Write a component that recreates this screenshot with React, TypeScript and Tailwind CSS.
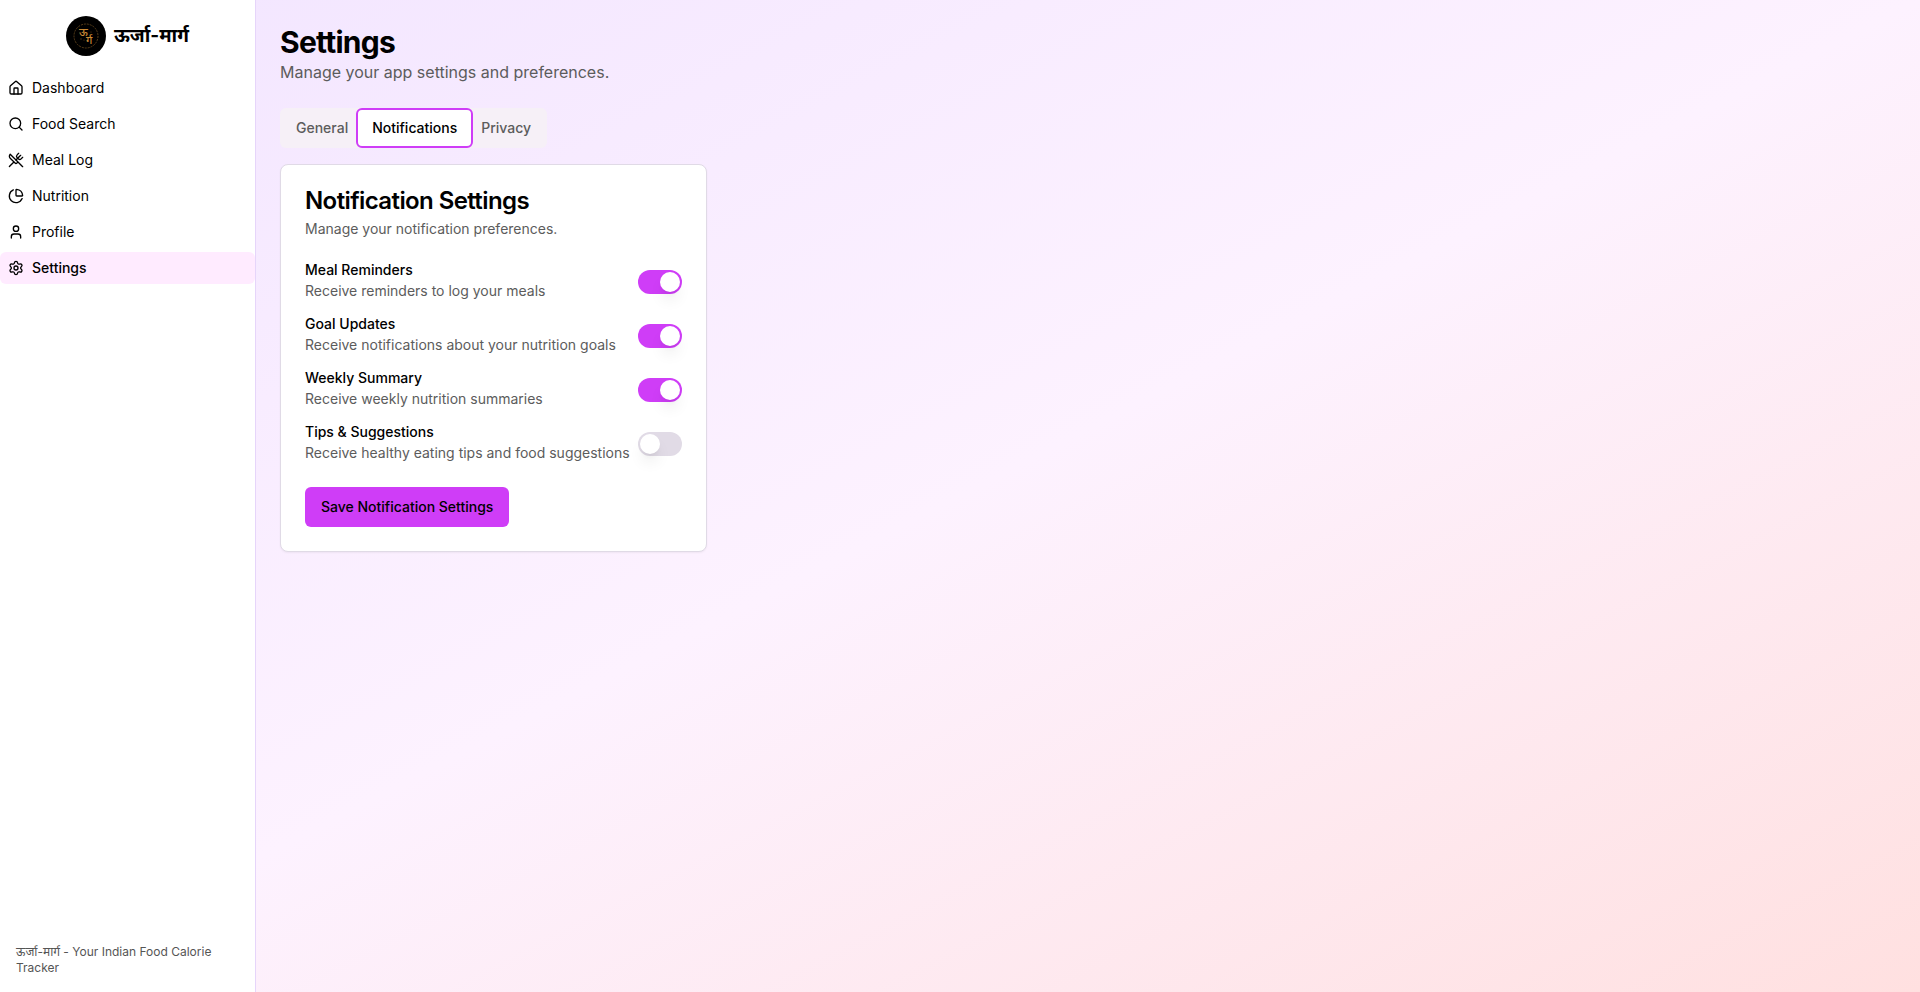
import { useState } from "react";
import { ChartPie, House, Search, Settings, User, UtensilsCrossed } from "lucide-react";

const navItems = [
  { label: "Dashboard", icon: House },
  { label: "Food Search", icon: Search },
  { label: "Meal Log", icon: UtensilsCrossed },
  { label: "Nutrition", icon: ChartPie },
  { label: "Profile", icon: User },
  { label: "Settings", icon: Settings },
];

const tabs = ["General", "Notifications", "Privacy"];

const preferences = [
  { id: "meal", label: "Meal Reminders", text: "Receive reminders to log your meals", on: true },
  { id: "goal", label: "Goal Updates", text: "Receive notifications about your nutrition goals", on: true },
  { id: "weekly", label: "Weekly Summary", text: "Receive weekly nutrition summaries", on: true },
  { id: "tips", label: "Tips & Suggestions", text: "Receive healthy eating tips and food suggestions", on: false },
];

function Logo() {
  return (
    <svg viewBox="0 0 40 40" className="size-10 shrink-0" aria-hidden="true">
      <circle cx="20" cy="20" r="20" fill="#000" />
      <circle cx="20" cy="20" r="12" fill="none" stroke="#5a3f1a" strokeWidth="1" strokeDasharray="2 1" />
      <g fill="#c98a35" fontSize="11" fontWeight="500">
        <text x="13" y="20">ऊ</text>
        <text x="20" y="28">र्ग</text>
      </g>
      <g fill="#5d3f17">
        <circle cx="15" cy="23" r="0.7" />
        <circle cx="18" cy="24" r="0.6" />
        <circle cx="25" cy="16" r="0.6" />
      </g>
    </svg>
  );
}

function Sidebar() {
  return (
    <aside className="flex w-64 shrink-0 flex-col border-r border-[#e6d5fa] bg-white">
      <div className="flex items-center justify-center gap-2 pt-4 pb-4">
        <Logo />
        <span className="text-[19px] leading-7 font-bold">ऊर्जा-मार्ग</span>
      </div>
      <nav className="flex flex-col gap-1">
        {navItems.map(({ label, icon: Icon }) => (
          <a
            key={label}
            href="#"
            className={
              label === "Settings"
                ? "flex h-8 items-center gap-2 rounded-md bg-[#ffebff] px-2 text-sm font-medium"
                : "flex h-8 items-center gap-2 rounded-md px-2 text-sm"
            }
          >
            <Icon className="size-4" />
            {label}
          </a>
        ))}
      </nav>
      <p className="mt-auto p-4 text-xs text-[#555555]">ऊर्जा-मार्ग - Your Indian Food Calorie Tracker</p>
    </aside>
  );
}

export default function App() {
  const [active, setActive] = useState("Notifications");
  return (
    <div className="flex min-h-screen bg-[linear-gradient(to_bottom_right,#f2e5ff,#fdf2ff,#ffe0e0)] font-['Inter','Noto_Sans_Devanagari',sans-serif] text-black">
      <Sidebar />
      <main className="flex-1 p-6">
        <h1 className="text-3xl font-bold tracking-tight">Settings</h1>
        <p className="text-[#5c5c5c]">Manage your app settings and preferences.</p>

        <div role="tablist" className="mt-6 flex h-10 w-fit items-center rounded-md bg-[#f6f0f7] px-1">
          {tabs.map((tab) => (
            <button
              key={tab}
              type="button"
              role="tab"
              aria-selected={tab === active}
              onClick={() => setActive(tab)}
              className={
                tab === active
                  ? "-mx-1 h-10 rounded-md border-2 border-[#cf3df7] bg-white px-3.5 text-sm font-medium"
                  : "h-8 px-3 text-sm font-medium text-[#5c5c5c]"
              }
            >
              {tab}
            </button>
          ))}
        </div>

        <section className="mt-4 w-fit rounded-lg border border-[#e0dae6] bg-white p-6 shadow-xs">
          <h2 className="text-2xl leading-none font-semibold tracking-tight">Notification Settings</h2>
          <p className="mt-1.5 text-sm text-[#5c5c5c]">Manage your notification preferences.</p>
          <div className="mt-6 flex flex-col gap-4">
            {preferences.map((item) => (
              <div key={item.id} className="flex items-center justify-between gap-2">
                <div>
                  <label htmlFor={item.id} className="block text-sm leading-none font-medium">
                    {item.label}
                  </label>
                  <p className="mt-1 text-sm text-[#5c5c5c]">{item.text}</p>
                </div>
                <input
                  id={item.id}
                  type="checkbox"
                  role="switch"
                  defaultChecked={item.on}
                  className="h-6 w-11 shrink-0 appearance-none rounded-full bg-[#e1dbe6] p-0.5 before:block before:size-5 before:rounded-full before:bg-white before:shadow-lg checked:bg-[#cf3df7] checked:before:translate-x-5"
                />
              </div>
            ))}
          </div>
          <button type="button" className="mt-6 h-10 rounded-md bg-[#cf3df7] px-4 text-sm font-medium">
            Save Notification Settings
          </button>
        </section>
      </main>
    </div>
  );
}
